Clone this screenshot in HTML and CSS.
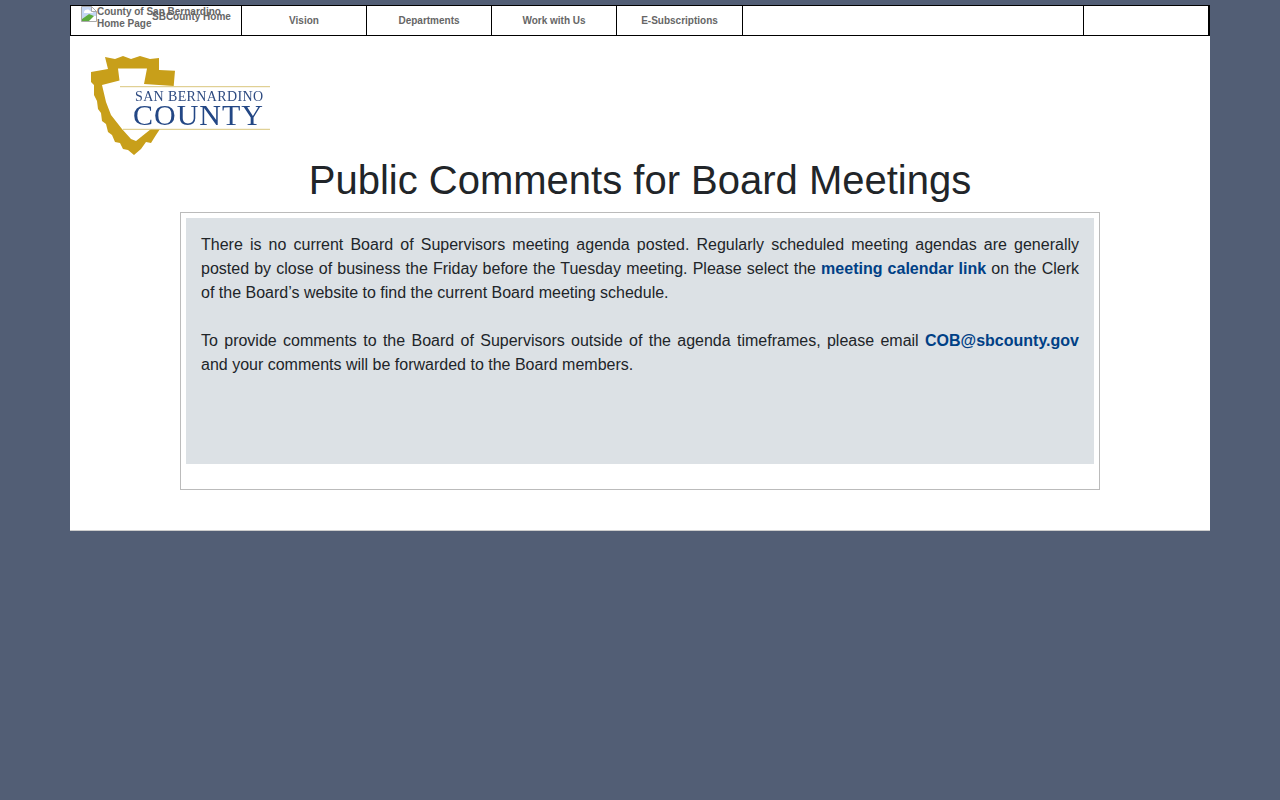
FILE: index.html
```html
<!DOCTYPE html>
<html>
<head>
	<meta charset="utf-8">
	<title>Public Comments for Board Meetings</title>
	<link rel="stylesheet" href="styles.css">
</head>
<body>
<div class="wrapper">
	<nav class="topnav">
		<a class="navcell homecell" href="#">
			<svg class="brokenimg" width="16" height="16" viewBox="0 0 16 16">
				<path d="M.5.5h10l5 5v10H.5z" fill="#c5d6f4" stroke="#a9a9a9"/>
				<path d="M3 6c1-3 5-3 6-1 2 0 3 1 3 2H3z" fill="#fff"/>
				<path d="M1 15v-2l7-5 4 2 3 0v5z" fill="#fff"/>
				<path d="M1 15v-2l7-5 5 2-5 5z" fill="#5cab3f"/>
				<path d="M10.500.5v5h5z" fill="#fff" stroke="#a9a9a9"/>
			</svg>
			<span class="alttext">County of San Bernardino Home Page</span>
			<span class="hometext">SBCounty Home</span>
		</a>
		<a class="navcell" href="#">Vision</a>
		<a class="navcell" href="#">Departments</a>
		<a class="navcell" href="#">Work with Us</a>
		<a class="navcell subs" href="#">E-Subscriptions</a>
		<div class="navcell wide"></div>
		<div class="navcell last"></div>
	</nav>

	<div class="logo">
		<svg width="180" height="102" viewBox="0 0 180 102">
			<path d="M15 2L25 4 33 1 41 4 50 1 60 4 69 3 69 15 85 15.700 83.700 31 54 29 57 13.500H28L29.500 25.500 12 30 16 47 21 60 32 74 41 84 46 86 61 74 70 74 66 80 61 88 56 87 51 94 44 100 38 95 33 94 30 88 25 87 22 80 18 77 16 69 12 66 11 58 8 54 7 46 4 40 4 30 1 27 1 17 18 14z" fill="#c89f1a"/>
			<path d="M30 31.700h150M33 74.300h147" stroke="#d9c67c" stroke-width="1"/>
			<text class="logotop" x="45" y="45.700" textLength="128">SAN BERNARDINO</text>
			<text class="logomain" x="43" y="70" textLength="130">COUNTY</text>
		</svg>
	</div>

	<h1 class="pagetitle">Public Comments for Board Meetings</h1>

	<div class="outerbox">
		<div class="notice">
			<p>There is no current Board of Supervisors meeting agenda posted. Regularly scheduled meeting agendas are generally posted by close of business the Friday before the Tuesday meeting. Please select the <a href="#">meeting calendar link</a> on the Clerk of the Board’s website to find the current Board meeting schedule.</p>
			<p>To provide comments to the Board of Supervisors outside of the agenda timeframes, please email <a href="#">COB@sbcounty.gov</a> and your comments will be forwarded to the Board members.</p>
		</div>
	</div>
</div>
</body>
</html>
```

FILE: styles.css
```css
body {
	margin: 0;
	padding-top: 5px;
	background: #525e75;
	color: #212529;
	font-family: "Liberation Sans", Arial, sans-serif;
}
.wrapper {
	width: 1140px;
	height: 526px;
	margin: 0 auto;
	box-sizing: border-box;
	background: #fff;
	border-bottom: 1px solid #ccc;
}
.topnav {
	display: flex;
	height: 31px;
	box-sizing: border-box;
	border: 1px solid #000;
	border-right-width: 2px;
}
.navcell {
	display: flex;
	align-items: center;
	justify-content: center;
	width: 125px;
	box-sizing: border-box;
	border-right: 1px solid #000;
	color: #666;
	font-size: 10px;
	font-weight: bold;
	text-decoration: none;
}
.homecell {
	position: relative;
	width: 171px;
}
.subs { width: 126px; }
.brokenimg {
	position: absolute;
	left: 10px;
	top: 0;
}
.alttext {
	position: absolute;
	left: 26px;
	top: 0;
	width: 134px;
	line-height: 12px;
}
.hometext {
	position: absolute;
	left: 81px;
	top: 5px;
	line-height: 12px;
	white-space: nowrap;
}
.wide { width: 341px; }
.last {
	width: 124px;
	border-right: 0;
}
.logo {
	height: 120px;
	padding: 19px 0 0 20px;
	box-sizing: border-box;
}
.logo svg {
	display: block;
	filter: blur(0.4px);
}
.logotop {
	font-family: "Liberation Serif", serif;
	font-size: 14px;
	fill: #2d4a80;
}
.logomain {
	font-family: "Liberation Serif", serif;
	font-size: 30px;
	fill: #234785;
}
.pagetitle {
	height: 56px;
	margin: 0;
	font-size: 40px;
	font-weight: normal;
	line-height: 48px;
	text-align: center;
}
.outerbox {
	width: 920px;
	height: 278px;
	margin: 0 auto;
	padding: 5px;
	box-sizing: border-box;
	border: 1px solid #bbb;
}
.notice {
	height: 246px;
	padding: 15px;
	box-sizing: border-box;
	background: #dce1e5;
	font-size: 16px;
	line-height: 24px;
	text-align: justify;
}
.notice p { margin: 0 0 24px; }
.notice a {
	color: #004085;
	font-weight: bold;
	text-decoration: none;
}
```
